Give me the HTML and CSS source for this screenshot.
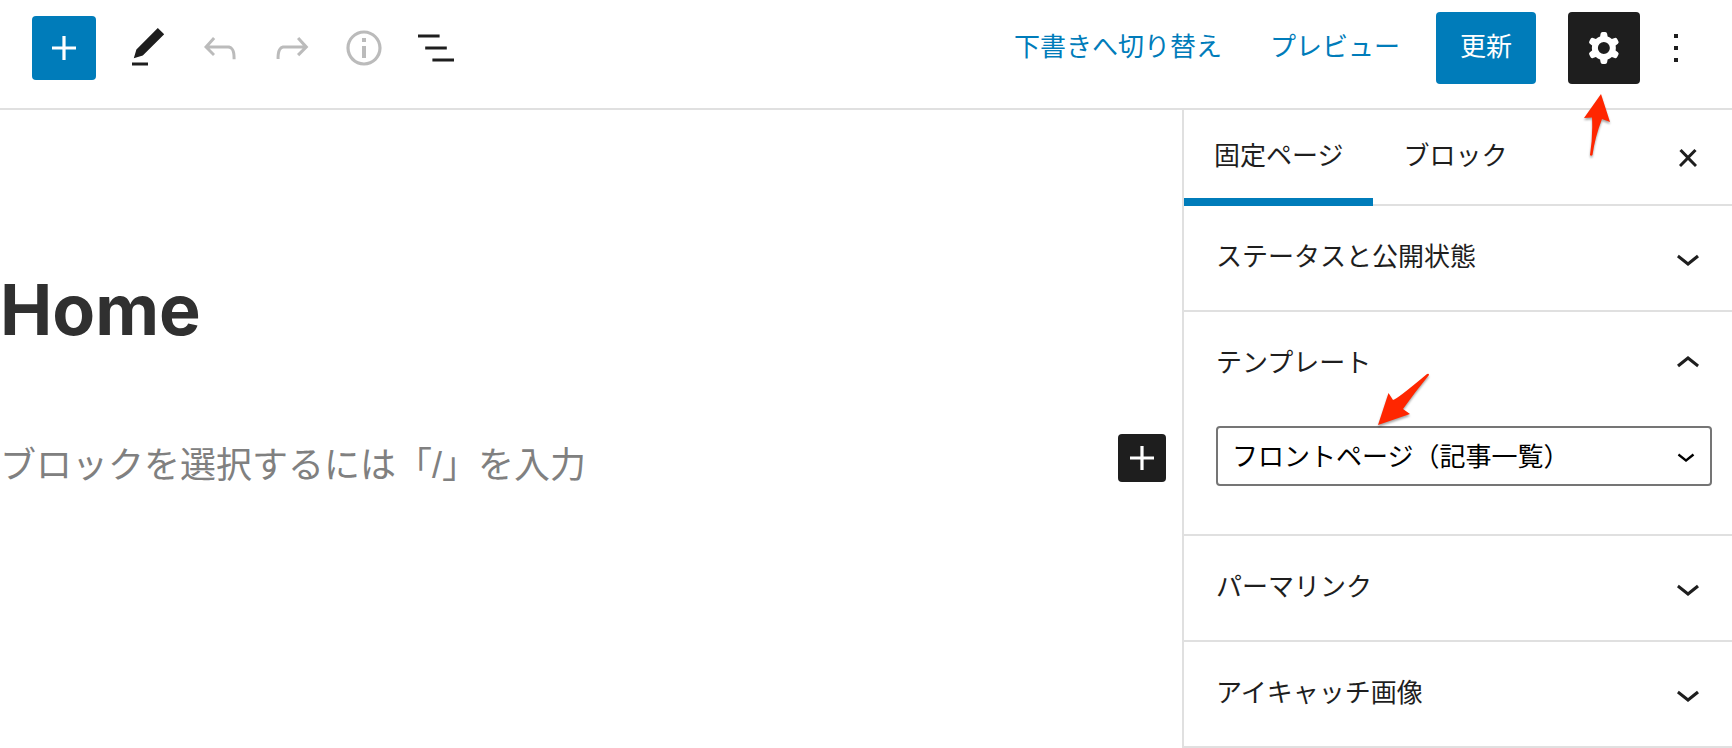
FILE: index.html
```html
<!DOCTYPE html>
<html lang="ja">
<head>
<meta charset="utf-8">
<meta name="viewport" content="width=device-width, initial-scale=1">
<title>固定ページを編集</title>
<link rel="stylesheet" href="styles.css">
</head>
<body>
<header class="header">
  <div class="toolbar">
    <button class="button primary inserter-toggle" type="button" aria-label="ブロックを追加">
      <svg class="icon" viewBox="0 0 24 24"><path d="M18 11.2h-5.2V6h-1.6v5.2H6v1.6h5.2V18h1.6v-5.2H18z"/></svg>
    </button>
    <div class="tools">
      <button class="button tool" type="button" aria-label="ツール">
        <svg class="icon" viewBox="0 0 24 24"><path d="M20.1 5.1L16.9 2 6.2 12.7l-1.3 4.4 4.5-1.3L20.1 5.1zM4 20.8h8v-1.5H4v1.5z"/></svg>
      </button>
      <button class="button tool" type="button" aria-label="元に戻す" disabled>
        <svg class="icon" viewBox="0 0 24 24"><path d="M18.3 11.7c-.6-.6-1.4-.9-2.3-.9H6.7l2.9-3.3-1.1-1-4.5 5L8.5 16l1-1-2.7-2.7H16c.5 0 .9.2 1.3.5 1 1 1 3.4 1 4.5v.3h1.5v-.2c0-1.5 0-4.3-1.5-5.7z"/></svg>
      </button>
      <button class="button tool" type="button" aria-label="やり直す" disabled>
        <svg class="icon" viewBox="0 0 24 24"><path d="M15.6 6.5l-1.1 1 2.9 3.3H8c-.9 0-1.7.3-2.3.9-1.4 1.5-1.4 4.2-1.4 5.6v.2h1.5v-.3c0-1.1 0-3.5 1-4.5.3-.3.7-.5 1.3-.5h9.2L14.5 15l1.1 1.1 4.6-4.6-4.6-5z"/></svg>
      </button>
      <button class="button tool" type="button" aria-label="詳細" disabled>
        <svg class="icon" viewBox="0 0 24 24"><path d="M12 3.2c-4.8 0-8.8 3.9-8.8 8.8 0 4.8 3.9 8.8 8.8 8.8 4.8 0 8.8-3.9 8.8-8.8 0-4.8-4-8.8-8.8-8.8zm0 16c-4 0-7.2-3.3-7.2-7.2C4.8 8 8 4.8 12 4.8s7.2 3.3 7.2 7.2c0 4-3.2 7.2-7.2 7.2zM11 17h2v-6h-2v6zm0-8h2V7h-2v2z"/></svg>
      </button>
      <button class="button tool" type="button" aria-label="リスト表示">
        <svg class="icon" viewBox="0 0 24 24"><path d="M13.8 5.2H3v1.5h10.8V5.2zm-3.6 12v1.5H21v-1.5H10.2zm7.2-6H6.6v1.5h10.8v-1.5z"/></svg>
      </button>
    </div>
  </div>
  <div class="actions">
    <button class="button link" type="button">下書きへ切り替え</button>
    <button class="button link" type="button">プレビュー</button>
    <button class="button primary update" type="button">更新</button>
    <div class="settings">
      <button class="button tool pressed" type="button" aria-label="設定" aria-pressed="true">
        <svg class="icon" viewBox="0 0 24 24"><path fill-rule="evenodd" d="M10.289 4.836A1 1 0 0111.275 4h1.306a1 1 0 01.987.836l.244 1.466c.787.26 1.503.679 2.108 1.218l1.393-.522a1 1 0 011.216.437l.653 1.13a1 1 0 01-.23 1.273l-1.148.944a6.025 6.025 0 010 2.435l1.149.946a1 1 0 01.23 1.272l-.653 1.13a1 1 0 01-1.216.437l-1.394-.522c-.605.54-1.32.958-2.108 1.218l-.244 1.466a1 1 0 01-.987.836h-1.306a1 1 0 01-.986-.836l-.244-1.466a5.995 5.995 0 01-2.108-1.218l-1.394.522a1 1 0 01-1.217-.436l-.653-1.131a1 1 0 01.23-1.272l1.149-.946a6.026 6.026 0 010-2.435l-1.148-.944a1 1 0 01-.23-1.272l.653-1.131a1 1 0 011.217-.437l1.393.522a5.994 5.994 0 012.108-1.218l.244-1.466zM14.929 12a3 3 0 11-6 0 3 3 0 016 0z"/></svg>
      </button>
      <svg class="arrow arrow-up" viewBox="0 0 40 70" aria-hidden="true"><path d="M21 0L30 28L22 25Q15 43 12.500 61Q11 62.500 10 61Q13 42 12 23.500L4 24Z"/></svg>
    </div>
    <button class="button tool" type="button" aria-label="オプション">
      <svg class="icon" viewBox="0 0 24 24"><path d="M13 19h-2v-2h2v2zm0-6h-2v-2h2v2zm0-6h-2V5h2v2z"/></svg>
    </button>
  </div>
</header>
<div class="body">
  <main class="editor">
    <h1 class="title">Home</h1>
    <div class="block">
      <input class="block-input" type="text" aria-label="空のブロック" placeholder="ブロックを選択するには「/」を入力">
      <button class="button pressed block-add" type="button" aria-label="ブロックを追加">
        <svg class="icon" viewBox="0 0 24 24"><path d="M18 11.2h-5.2V6h-1.6v5.2H6v1.6h5.2V18h1.6v-5.2H18z"/></svg>
      </button>
    </div>
  </main>
  <aside class="sidebar">
    <div class="tabs">
      <button class="tab active" type="button">固定ページ</button>
      <button class="tab" type="button">ブロック</button>
      <button class="button close" type="button" aria-label="設定を閉じる">
        <svg class="icon" viewBox="0 0 24 24"><path d="M13 11.9l3.3-3.4-1.1-1-3.2 3.3-3.2-3.3-1.1 1 3.3 3.4-3.5 3.6 1 1L12 13l3.5 3.5 1-1z"/></svg>
      </button>
    </div>
    <section class="panel">
      <h2 class="panel-title"><button class="panel-toggle" type="button" aria-expanded="false"><span class="panel-label">ステータスと公開状態</span>
        <svg class="icon" viewBox="0 0 24 24"><path d="M17.5 11.6L12 16l-5.5-4.4.9-1.2L12 14l4.5-3.6 1 1.2z"/></svg></button></h2>
    </section>
    <section class="panel">
      <h2 class="panel-title"><button class="panel-toggle" type="button" aria-expanded="true"><span class="panel-label" id="template-label">テンプレート</span>
        <svg class="icon" viewBox="0 0 24 24"><path d="M6.5 12.4L12 8l5.5 4.4-.9 1.2L12 10l-4.5 3.6-1-1.2z"/></svg></button></h2>
      <div class="panel-body">
        <div class="select-wrap">
          <select class="select" aria-labelledby="template-label">
            <option>フロントページ（記事一覧）</option>
          </select>
          <svg class="select-icon" viewBox="0 0 24 24" aria-hidden="true"><path d="M17.5 11.6L12 16l-5.5-4.4.9-1.2L12 14l4.5-3.6 1 1.2z"/></svg>
          <svg class="arrow arrow-down" viewBox="0 0 70 60" aria-hidden="true"><path d="M3 53L13.500 21L18 28Q21 28 52 2Q54 1 54 3Q40 20 28 37L35 42Z"/></svg>
        </div>
      </div>
    </section>
    <section class="panel">
      <h2 class="panel-title"><button class="panel-toggle" type="button" aria-expanded="false"><span class="panel-label">パーマリンク</span>
        <svg class="icon" viewBox="0 0 24 24"><path d="M17.5 11.6L12 16l-5.5-4.4.9-1.2L12 14l4.5-3.6 1 1.2z"/></svg></button></h2>
    </section>
    <section class="panel">
      <h2 class="panel-title"><button class="panel-toggle" type="button" aria-expanded="false"><span class="panel-label">アイキャッチ画像</span>
        <svg class="icon" viewBox="0 0 24 24"><path d="M17.5 11.6L12 16l-5.5-4.4.9-1.2L12 14l4.5-3.6 1 1.2z"/></svg></button></h2>
    </section>
  </aside>
</div>
</body>
</html>
```
FILE: styles.css
```css
:root {
  --blue: #007cba;
  --ink: #1e1e1e;
  --line: #e0e0e0;
  --ui: "Liberation Sans", "Noto Sans CJK JP", sans-serif;
}

*,
*::before,
*::after {
  box-sizing: border-box;
}

body {
  display: flex;
  flex-direction: column;
  min-height: 100vh;
  margin: 0;
  background: #fff;
  color: var(--ink);
  font-family: var(--ui);
  font-size: 26px;
  line-height: 36px;
}

button,
input,
select {
  margin: 0;
  padding: 0;
  border: 0;
  background: none;
  color: inherit;
  font: inherit;
}

h1,
h2 {
  margin: 0;
  font: inherit;
}

.icon {
  display: block;
  flex: none;
  width: 48px;
  height: 48px;
  fill: currentColor;
}

.header {
  display: flex;
  align-items: center;
  justify-content: space-between;
  padding: 12px 20px 24px 32px;
  border-bottom: 2px solid var(--line);
}

.toolbar {
  display: flex;
  align-items: center;
  gap: 16px;
}

.tools,
.actions {
  display: flex;
  align-items: center;
}

.button {
  display: flex;
  align-items: center;
  justify-content: center;
  flex: none;
  border-radius: 4px;
  white-space: nowrap;
}

.primary {
  background: var(--blue);
  color: #fff;
}

.pressed {
  background: var(--ink);
  color: #fff;
}

.inserter-toggle {
  width: 64px;
  height: 64px;
}

.tool {
  width: 72px;
  height: 72px;
}

.tool:disabled {
  color: #bbb;
}

.link,
.update {
  height: 72px;
  padding: 0 24px 2px;
}

.link {
  color: var(--blue);
}

.update {
  margin: 0 32px 0 12px;
}

.settings,
.select-wrap {
  position: relative;
}

.arrow {
  position: absolute;
  z-index: 1;
  fill: #ff2600;
  filter: drop-shadow(0 2px 1px rgb(0 0 0 / 35%));
  pointer-events: none;
}

.arrow-up {
  top: 82px;
  left: 12px;
  width: 40px;
  height: 70px;
}

.arrow-down {
  top: -54px;
  left: 159px;
  width: 70px;
  height: 60px;
}

.body {
  display: grid;
  flex: 1;
  grid-template-columns: minmax(0, 1fr) 550px;
}

.editor {
  display: flex;
  flex-direction: column;
  gap: 82px;
  padding: 158px 16px 32px 0;
}

.title {
  color: #303030;
  font-family: Inter, "Liberation Sans", sans-serif;
  font-size: 70px;
  font-weight: 700;
  line-height: 84px;
}

.block {
  display: flex;
  align-items: flex-start;
}

.block-input {
  flex: 1;
  min-width: 0;
  height: 64px;
  outline: 0;
  font-size: 36px;
}

.block-input::placeholder {
  color: #808080;
  opacity: 1;
}

.block-add {
  width: 48px;
  height: 48px;
}

.sidebar {
  border-left: 2px solid var(--line);
}

.tabs {
  display: flex;
  height: 96px;
  padding-right: 20px;
  box-shadow: inset 0 -2px var(--line);
}

.tab {
  padding: 0 30px 4px;
}

.tab.active {
  box-shadow: inset 0 -8px var(--blue);
}

.close {
  margin-left: auto;
}

.panel {
  border-bottom: 2px solid var(--line);
}

.panel-toggle {
  display: flex;
  align-items: center;
  justify-content: space-between;
  width: 100%;
  height: 104px;
  padding: 0 20px 0 32px;
  text-align: left;
}

.panel-label {
  padding-bottom: 2px;
}

.panel-body {
  padding: 10px 20px 48px 32px;
}

.select {
  display: block;
  width: 100%;
  height: 60px;
  padding: 2px 56px 0 14px;
  border: 2px solid #757575;
  border-radius: 4px;
  background: #fff;
  color: #000;
  appearance: none;
}

.select-icon {
  position: absolute;
  top: 12px;
  right: 8px;
  width: 36px;
  height: 36px;
  pointer-events: none;
}
```
